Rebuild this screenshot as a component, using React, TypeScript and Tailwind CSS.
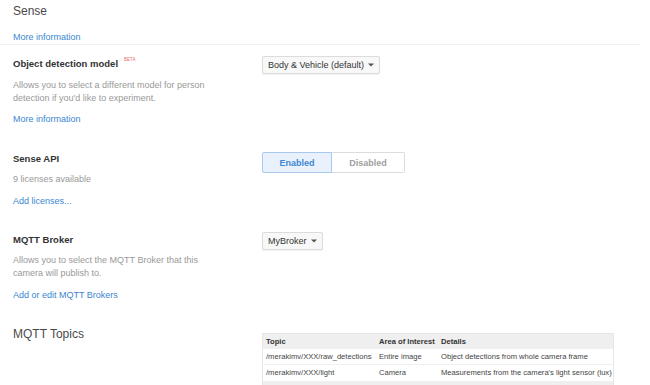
import React from "react";

const Caret = () => (
  <svg width="6" height="4" viewBox="0 0 6 4" className="ml-[4px]">
    <path d="M0 0.5 L6 0.5 L3 3.5 Z" fill="#555" />
  </svg>
);

const Dropdown = ({ label }: { label: string }) => (
  <div className="flex items-center h-[18px] px-[5px] bg-[#f8f8f8] border border-[#dcdcdc] rounded-[2px] shadow-[0_1px_1px_rgba(0,0,0,0.06)] text-[9px] leading-[12px] text-[#333]">
    {label}
    <Caret />
  </div>
);

export default function App() {
  return (
    <div className="w-[650px] h-[385px] overflow-hidden bg-white font-['Liberation_Sans',Arial,sans-serif]">
      <div className="w-[640px] border-b border-[#f0f0f0] pl-[13px]">
        <div className="pt-[4px] text-[12px] leading-[14px] text-[#4a4a4a]">Sense</div>
        <div className="mt-[13px] pb-[1px] text-[9px] leading-[12px] text-[#3b86d1]">More information</div>
      </div>

      <div className="pl-[13px] grid grid-cols-[249px_1fr]">
        {/* Object detection model */}
        <div className="mt-[13px]">
          <div className="flex items-start text-[9.5px] leading-[12px] font-bold text-[#333]">
            Object detection model
            <span className="ml-[6px] mt-[-1px] text-[4.5px] leading-[6px] font-normal text-[#e8736b]">BETA</span>
          </div>
          <div className="mt-[9px] text-[9px] leading-[13px] text-[#999]">
            Allows you to select a different model for person
            <br />
            detection if you'd like to experiment.
          </div>
          <div className="mt-[8px] text-[9px] leading-[12px] text-[#3b86d1]">More information</div>
        </div>
        <div className="mt-[11px] flex items-start">
          <Dropdown label="Body & Vehicle (default)" />
        </div>

        {/* Sense API */}
        <div className="mt-[28px]">
          <div className="text-[9.5px] leading-[12px] font-bold text-[#333]">Sense API</div>
          <div className="mt-[8px] text-[9px] leading-[13px] text-[#999]">9 licenses available</div>
          <div className="mt-[9px] text-[9px] leading-[12px] text-[#3b86d1]">Add licenses...</div>
        </div>
        <div className="mt-[27px] flex items-start">
          <div className="flex h-[21px] text-[9px] leading-[12px] font-bold">
            <div className="w-[70px] flex items-center justify-center bg-[#e9f2fc] border border-[#a8c9ee] rounded-l-[2px] text-[#3f86d6]">
              Enabled
            </div>
            <div className="w-[73px] flex items-center justify-center bg-white border border-l-0 border-[#dcdcdc] rounded-r-[2px] text-[#a0a0a0]">
              Disabled
            </div>
          </div>
        </div>

        {/* MQTT Broker */}
        <div className="mt-[27px]">
          <div className="text-[9.5px] leading-[12px] font-bold text-[#333]">MQTT Broker</div>
          <div className="mt-[8px] text-[9px] leading-[13px] text-[#999]">
            Allows you to select the MQTT Broker that this
            <br />
            camera will publish to.
          </div>
          <div className="mt-[9px] text-[9px] leading-[12px] text-[#3b86d1]">Add or edit MQTT Brokers</div>
        </div>
        <div className="mt-[25px] flex items-start">
          <Dropdown label="MyBroker" />
        </div>

        {/* MQTT Topics */}
        <div className="mt-[26px] text-[12px] leading-[14px] text-[#4a4a4a]">MQTT Topics</div>
        <div className="mt-[32px]">
          <div className="w-[352px] border border-[#e6e6e6] text-[7.6px] leading-[10px] text-[#444] whitespace-nowrap">
            <div className="grid grid-cols-[113px_62px_1fr] h-[15px] items-center bg-[#efefef] font-bold text-[#333]">
              <div className="pl-[3px]">Topic</div>
              <div className="pl-[3px]">Area of Interest</div>
              <div className="pl-[3px]">Details</div>
            </div>
            <div className="grid grid-cols-[113px_62px_1fr] h-[16px] items-center bg-white border-b border-[#f0f0f0]">
              <div className="pl-[3px]">/merakimv/XXX/raw_detections</div>
              <div className="pl-[3px]">Entire image</div>
              <div className="pl-[3px]">Object detections from whole camera frame</div>
            </div>
            <div className="grid grid-cols-[113px_62px_1fr] h-[16px] items-center bg-white">
              <div className="pl-[3px]">/merakimv/XXX/light</div>
              <div className="pl-[3px]">Camera</div>
              <div className="pl-[3px]">Measurements from the camera's light sensor (lux)</div>
            </div>
            <div className="h-[16px] bg-[#efefef]" />
          </div>
        </div>
      </div>
    </div>
  );
}
